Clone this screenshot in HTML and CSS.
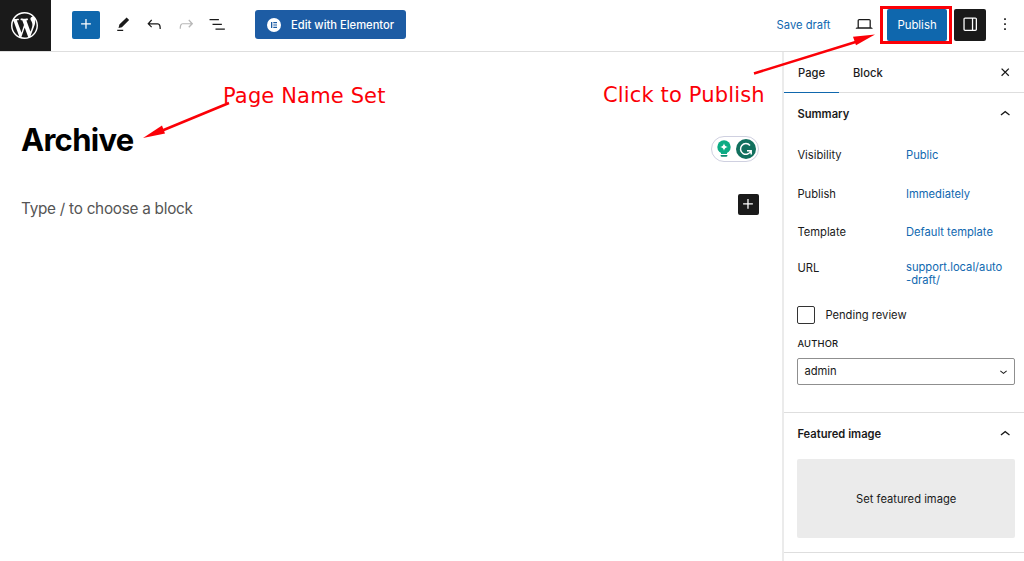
FILE: index.html
```html
<!DOCTYPE html>
<html lang="en">
<head>
  <meta charset="UTF-8">
  <meta name="viewport" content="width=device-width, initial-scale=1">
  <title>Archive - Edit Page</title>
  <link rel="stylesheet" href="styles.css">
</head>
<body>
  <header class="editor-header">
    <a href="#" class="wp-logo" title="View Pages">
      <svg viewBox="0 0 20 20"><path d="M20 10c0-5.51-4.49-10-10-10C4.48 0 0 4.49 0 10c0 5.52 4.48 10 10 10 5.51 0 10-4.48 10-10zM7.78 15.37L4.37 6.22c.55-.02 1.17-.08 1.17-.08.5-.06.44-1.13-.06-1.11 0 0-1.45.11-2.37.11-.18 0-.37 0-.58-.01C4.12 2.69 6.87 1.11 10 1.11c2.33 0 4.45.87 6.05 2.34-.68-.11-1.65.39-1.65 1.58 0 .74.45 1.36.9 2.1.35.61.55 1.36.55 2.46 0 1.49-1.4 5-1.4 5l-3.03-8.37c.54-.02.82-.17.82-.17.5-.05.44-1.25-.06-1.22 0 0-1.44.12-2.38.12-.87 0-2.33-.12-2.33-.12-.5-.03-.56 1.2-.06 1.22l.92.08 1.26 3.41zM17.41 10c.24-.64.74-1.87.43-4.25.7 1.29 1.05 2.71 1.05 4.25 0 3.29-1.73 6.24-4.4 7.78.97-2.59 1.94-5.2 2.92-7.78zM6.1 18.09C3.12 16.65 1.11 13.53 1.11 10c0-1.3.23-2.48.72-3.59C3.25 10.3 4.67 14.2 6.1 18.09zm4.03-6.63l2.58 6.98c-.86.29-1.76.45-2.71.45-.79 0-1.57-.11-2.29-.33.81-2.38 1.62-4.74 2.42-7.1z"/></svg>
    </a>

    <div class="tools">
      <button class="btn-add" title="Add block"><svg class="icon" viewBox="0 0 24 24"><path d="M11 12.5V17.5H12.5V12.5H17.5V11H12.5V6H11V11H6V12.5H11Z"/></svg></button>
      <button class="btn-icon" title="Tools"><svg class="icon" viewBox="0 0 24 24"><path d="m19 7-3-3-8.5 8.5-1 4 4-1L19 7Zm-7 11.5H5V20h7v-1.5Z"/></svg></button>
      <button class="btn-icon" title="Undo"><svg class="icon" viewBox="0 0 24 24"><path d="M18.3 11.7c-.6-.6-1.4-.9-2.3-.9H6.7l2.9-3.3-1.1-1-4.5 5L8.5 16l1-1-2.7-2.7H16c.5 0 .9.2 1.3.5 1 1 1 3.4 1 4.5v.3h1.5v-.2c0-1.5 0-4.3-1.5-5.7z"/></svg></button>
      <button class="btn-icon disabled" title="Redo"><svg class="icon" viewBox="0 0 24 24"><path d="M15.6 6.5l-1.1 1 2.9 3.3H8c-.9 0-1.7.3-2.3.9-1.4 1.5-1.4 4.2-1.4 5.6v.2h1.5v-.3c0-1.1 0-3.5 1-4.5.3-.3.7-.5 1.3-.5h9.2L14.5 15l1.1 1.1 4.6-4.6-4.6-5z"/></svg></button>
      <button class="btn-icon" title="List view"><svg class="icon" viewBox="0 0 24 24"><path d="M3 6h11v1.5H3V6Zm3.5 5.5h11V13h-11v-1.5ZM21 17H10v1.5h11V17Z"/></svg></button>
    </div>

    <button class="btn-elementor">
      <svg viewBox="0 0 14 14"><circle cx="7" cy="7" r="7" fill="#fff"/><path fill="#1d5ca4" d="M4 4h1.3v6H4zM6.3 4H10v1.2H6.3zM6.3 6.4H10v1.2H6.3zM6.3 8.8H10V10H6.3z"/></svg>
      <span>Edit with Elementor</span>
    </button>

    <div class="settings">
      <a href="#" class="save-draft">Save draft</a>
      <button class="btn-icon btn-preview" title="Preview"><svg class="icon" viewBox="0 0 24 24"><path d="M20.5 16h-.7V8c0-1.1-.9-2-2-2H6.2c-1.1 0-2 .9-2 2v8h-.7c-.8 0-1.5.7-1.5 1.5h20c0-.8-.7-1.5-1.5-1.5zM5.7 8c0-.3.2-.5.5-.5h11.6c.3 0 .5.2.5.5v7.6H5.7V8z"/></svg></button>
      <div class="publish-highlight"><button class="btn-publish">Publish</button></div>
      <button class="btn-sidebar" title="Settings"><svg class="icon" viewBox="0 0 24 24"><path d="M18 4H6c-1.1 0-2 .9-2 2v12c0 1.1.9 2 2 2h12c1.1 0 2-.9 2-2V6c0-1.1-.9-2-2-2zm-4 14.5H6c-.3 0-.5-.2-.5-.5V6c0-.3.2-.5.5-.5h8v13zm4.5-.5c0 .3-.2.5-.5.5h-2.5v-13H18c.3 0 .5.2.5.5v12z"/></svg></button>
      <button class="btn-more" title="Options"><svg class="icon" viewBox="0 0 24 24"><path d="M13 19h-2v-2h2v2zm0-6h-2v-2h2v2zm0-6h-2V5h2v2z"/></svg></button>
    </div>
  </header>

  <div class="editor-body">
    <main class="canvas">
      <div class="title-row">
        <h1>Archive</h1>
        <div class="grammarly">
          <svg class="bulb" viewBox="0 0 14 18"><circle cx="7" cy="7" r="6.7" fill="#0bab84"/><path fill="#0bab84" d="M4 11h6v3H4z"/><path fill="#fff" d="M7 3.2c.5 2.4 1.3 3.2 3.8 3.8C8.3 7.6 7.5 8.4 7 10.8 6.5 8.4 5.7 7.6 3.2 7 5.7 6.4 6.5 5.6 7 3.2z"/><path fill="#0b8a70" d="M3.6 15h6.8v.5a1.3 1.3 0 0 1-1.3 1.3H4.9a1.3 1.3 0 0 1-1.3-1.3z"/></svg>
          <svg class="mark" viewBox="0 0 20 20"><circle cx="10" cy="10" r="10" fill="#11705e"/><path fill="none" stroke="#fff" stroke-width="1.5" d="M14 6.4A5.4 5.4 0 1 0 14.9 12M15.2 15.4v-3.7h-4.2"/></svg>
        </div>
      </div>
      <div class="block-row">
        <p>Type / to choose a block</p>
        <button class="btn-inserter" title="Add block"><svg class="icon" viewBox="0 0 24 24"><path d="M11 12.5V17.5H12.5V12.5H17.5V11H12.5V6H11V11H6V12.5H11Z"/></svg></button>
      </div>
    </main>

    <aside class="sidebar">
      <div class="tabs">
        <a href="#" class="tab active">Page</a>
        <a href="#" class="tab">Block</a>
        <button class="btn-close" title="Close"><svg class="icon" viewBox="0 0 24 24"><path d="M12 13.06l3.712 3.713 1.061-1.06L13.061 12l3.712-3.712-1.06-1.06L12 10.938 8.288 7.227l-1.061 1.06L10.939 12l-3.712 3.712 1.06 1.061L12 13.061z"/></svg></button>
      </div>

      <section class="panel summary">
        <h2>Summary <svg class="icon" viewBox="0 0 24 24"><path d="M6.5 12.4L12 8l5.5 4.4-.9 1.2L12 10l-4.5 3.6-1-1.2z"/></svg></h2>
        <div class="row"><span>Visibility</span><a href="#">Public</a></div>
        <div class="row"><span>Publish</span><a href="#">Immediately</a></div>
        <div class="row"><span>Template</span><a href="#">Default template</a></div>
        <div class="row row-url"><span>URL</span><a href="#">support.local/auto<br>-draft/</a></div>
        <label class="pending"><input type="checkbox"> Pending review</label>
        <div class="author-label">Author</div>
        <div class="select"><span>admin</span><svg viewBox="0 0 24 24"><path d="M17.5 11.6L12 16l-5.5-4.4.9-1.2L12 14l4.5-3.6 1 1.2z"/></svg></div>
      </section>

      <section class="panel featured">
        <h2>Featured image <svg class="icon" viewBox="0 0 24 24"><path d="M6.5 12.4L12 8l5.5 4.4-.9 1.2L12 10l-4.5 3.6-1-1.2z"/></svg></h2>
        <button class="featured-image">Set featured image</button>
      </section>
    </aside>
  </div>

  <div class="notes">
    <svg viewBox="0 0 1024 561">
      <path d="M229 103L160 131.5M754 73.5L858 41.3"/>
      <polygon points="143,138 162,125.5 165,133.5"/>
      <polygon points="875,34.5 853,36.7 856,45.2"/>
    </svg>
    <span class="note note-name">Page Name Set</span>
    <span class="note note-publish">Click to Publish</span>
  </div>
</body>
</html>
```
FILE: styles.css
```css
:root {
  --blue: #0f67ad;
  --link: #1068b0;
  --dark: #1a1a1a;
  --line: #dedede;
  --red: #fb0007;
}

* {
  box-sizing: border-box;
}

body {
  margin: 0;
  height: 561px;
  display: flex;
  flex-direction: column;
  overflow: hidden;
  position: relative;
  font-family: Inter, "Liberation Sans", sans-serif;
  font-size: 11.2px;
  color: var(--dark);
  background: #fff;
}

a {
  color: var(--link);
  text-decoration: none;
}

button {
  display: flex;
  align-items: center;
  justify-content: center;
  padding: 0;
  border: none;
  background: none;
  font: inherit;
  color: inherit;
}

svg {
  display: block;
  fill: currentColor;
}

.icon {
  width: 20.4px;
  height: 20.4px;
}

/* Top bar */
.editor-header {
  display: flex;
  align-items: center;
  height: 52px;
  flex: none;
  padding-bottom: 2px;
  border-bottom: 1px solid var(--line);
}

.wp-logo {
  display: flex;
  align-items: center;
  justify-content: center;
  width: 51px;
  height: 51px;
  margin-bottom: -2px;
  padding-right: 2px;
  background: var(--dark);
  color: #fff;
}

.wp-logo svg {
  width: 27px;
  height: 27px;
}

.tools {
  display: flex;
  align-items: center;
  margin-left: 21px;
}

.btn-add {
  width: 28px;
  height: 28px;
  margin-right: 7px;
  border-radius: 2px;
  background: var(--blue);
  color: #fff;
}

.btn-icon {
  width: 31.6px;
  height: 31px;
}

.disabled {
  color: #b8b8b8;
}

.btn-elementor {
  width: 150.5px;
  height: 29px;
  margin-left: 22px;
  gap: 10px;
  border-radius: 3px;
  background: #1d5ca4;
  color: #fff;
  font-size: 11.2px;
  font-weight: 500;
}

.btn-elementor svg {
  width: 14px;
  height: 14px;
}

.settings {
  display: flex;
  align-items: center;
  margin-left: auto;
  padding-right: 9px;
}

.save-draft {
  padding-top: 1px;
}

.btn-preview {
  margin-left: 18px;
}

.publish-highlight {
  width: 72px;
  height: 38px;
  padding: 3px 3px 3px 4px;
  border: 3px solid var(--red);
}

.btn-publish {
  width: 60px;
  height: 32px;
  margin-top: -3px;
  border-radius: 2px;
  background: var(--blue);
  color: #fff;
  font-size: 11.4px;
}

.btn-sidebar {
  width: 32px;
  height: 32px;
  margin-left: 2px;
  border-radius: 2px;
  background: var(--dark);
  color: #fff;
}

.btn-more {
  width: 20px;
  margin-left: 9px;
}

/* Canvas */
.editor-body {
  display: flex;
  flex: 1;
}

.canvas {
  flex: 1;
  padding: 64px 23px 0 21px;
}

.title-row {
  display: flex;
  justify-content: space-between;
}

h1 {
  margin: 0;
  font-size: 31px;
  line-height: 48px;
  font-weight: 700;
  letter-spacing: -0.7px;
  color: #000;
}

.grammarly {
  display: flex;
  align-items: center;
  justify-content: space-between;
  width: 48px;
  height: 26px;
  margin-top: 20px;
  padding: 0 2px 0 5px;
  border: 1px solid #cfd0e0;
  border-radius: 13px;
}

.bulb {
  width: 14px;
  height: 18px;
}

.mark {
  width: 20px;
  height: 20px;
}

.block-row {
  display: flex;
  align-items: flex-start;
  justify-content: space-between;
  margin-top: 30px;
}

.block-row p {
  margin: 5px 0 0;
  font-size: 15.3px;
  line-height: 20px;
  letter-spacing: -0.26px;
  color: #555;
}

.btn-inserter {
  width: 21px;
  height: 21px;
  border-radius: 2px;
  background: var(--dark);
  color: #fff;
}

/* Sidebar */
.sidebar {
  width: 242px;
  border-left: 2px solid #ebebeb;
}

.tabs {
  display: flex;
  height: 41px;
  border-bottom: 1px solid var(--line);
}

.tab {
  padding: 0 14px;
  line-height: 42px;
  font-weight: 500;
  color: var(--dark);
}

.tab.active {
  height: 41px;
  border-bottom: 1px solid var(--blue);
}

.btn-close {
  margin-left: auto;
  margin-right: 9px;
}

.panel {
  padding: 0 9px 0 13.4px;
  border-bottom: 1px solid var(--line);
}

.panel h2 {
  display: flex;
  align-items: center;
  justify-content: space-between;
  margin: 0;
  height: 42px;
  font-size: 11.2px;
  font-weight: 600;
}

.summary {
  height: 320px;
}

.summary h2 {
  margin-bottom: 1px;
}

.row {
  display: flex;
  align-items: center;
  height: 38.5px;
}

.row span {
  width: 108.6px;
}

.row-url {
  align-items: flex-start;
  height: 53px;
  padding-top: 9px;
  line-height: 13px;
}

.row-url span {
  padding-top: 1px;
}

.pending {
  display: flex;
  align-items: center;
  gap: 10px;
  height: 20px;
}

.pending input {
  appearance: none;
  width: 18px;
  height: 18px;
  margin: 0;
  border: 1px solid #333;
  border-radius: 2px;
}

.author-label {
  margin-top: 12px;
  font-size: 9.4px;
  line-height: 14px;
  font-weight: 500;
  letter-spacing: 0.2px;
  text-transform: uppercase;
}

.select {
  display: flex;
  align-items: center;
  justify-content: space-between;
  height: 27px;
  margin-top: 7px;
  padding: 0 3px 0 6px;
  border: 1px solid #8f8f8f;
  border-radius: 2px;
}

.select svg {
  width: 15px;
  height: 15px;
}

.featured {
  height: 140px;
}

.featured-image {
  width: 100%;
  height: 79px;
  margin-top: 4px;
  border-radius: 2px;
  background: #ebebeb;
}

/* Red notes drawn over the editor */
.notes {
  position: absolute;
  inset: 0;
  color: var(--red);
  pointer-events: none;
}

.notes path {
  stroke: var(--red);
  stroke-width: 2.5;
}

.note {
  position: absolute;
  font-family: "DejaVu Sans", Verdana, sans-serif;
  font-size: 21px;
  line-height: 26px;
  letter-spacing: 0.15px;
  white-space: nowrap;
}

.note-name {
  left: 223px;
  top: 83px;
}

.note-publish {
  left: 603px;
  top: 82px;
}
```
